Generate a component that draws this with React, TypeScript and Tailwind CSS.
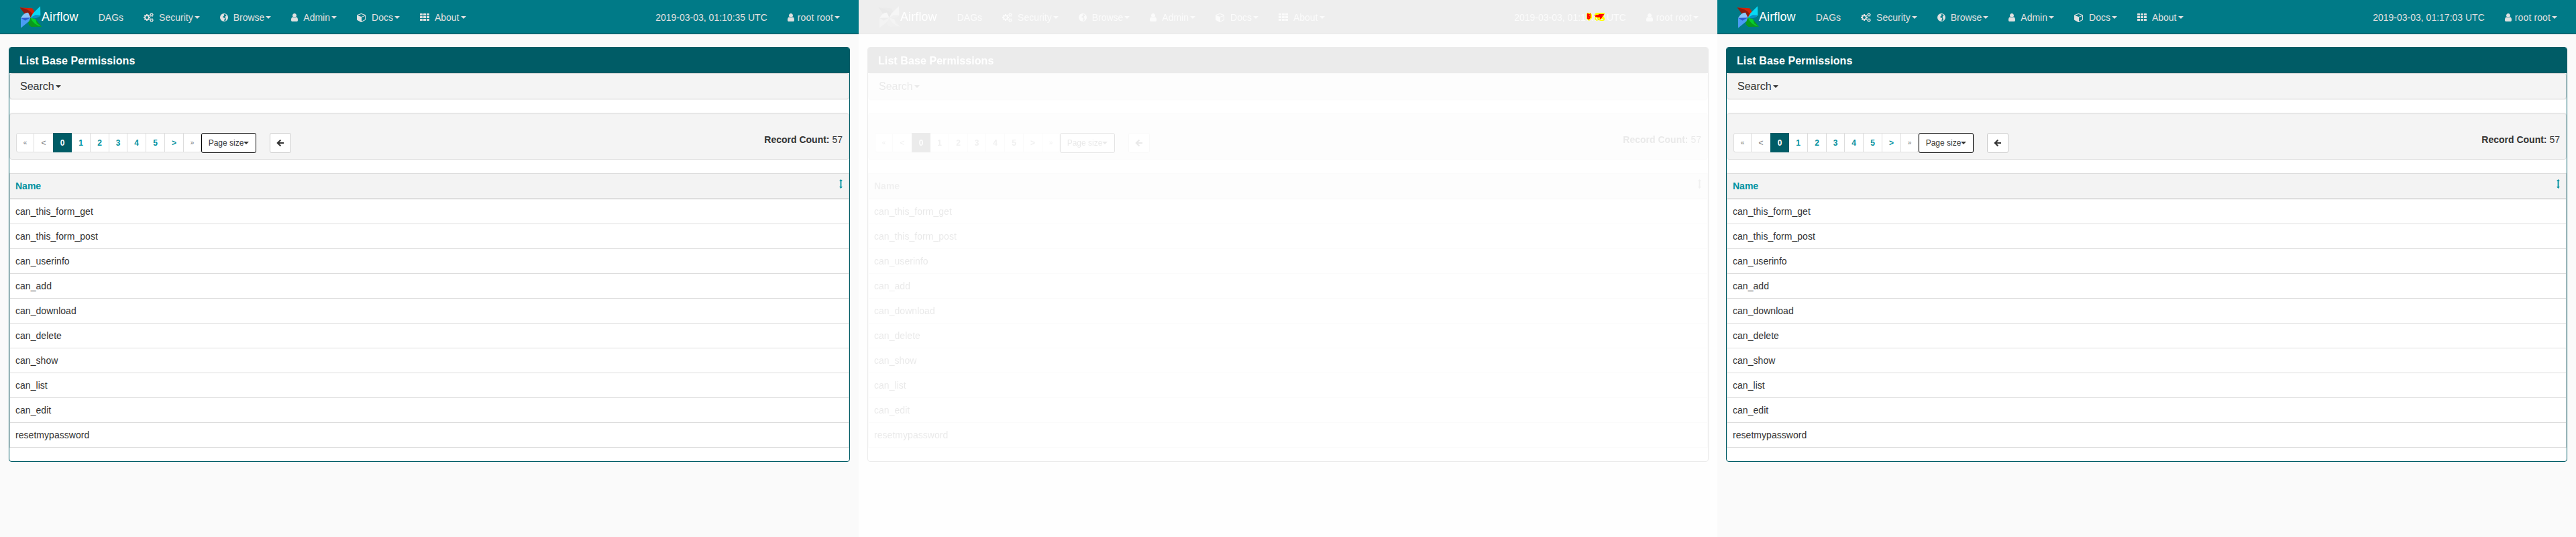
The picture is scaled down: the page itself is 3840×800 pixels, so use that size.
import type { ReactNode } from "react";

const rows = [
  "can_this_form_get",
  "can_this_form_post",
  "can_userinfo",
  "can_add",
  "can_download",
  "can_delete",
  "can_show",
  "can_list",
  "can_edit",
  "resetmypassword",
];

const userPath =
  "M1280 1399q0 109-62.5 187t-150.5 78h-854q-88 0-150.5-78t-62.5-187q0-85 8.5-160.5t31.5-152 58.5-131 94-89 134.5-34.5q131 128 313 128t313-128q76 0 134.5 34.5t94 89 58.5 131 31.5 152 8.5 160.5zm-256-887q0 159-112.5 271.5t-271.5 112.5-271.5-112.5-112.5-271.5 112.5-271.5 271.5-112.5 271.5 112.5 112.5 271.5z";

function UserIcon() {
  return (
    <svg className="h-[14px] w-[10px] shrink-0" viewBox="0 0 1280 1792" fill="currentColor">
      <path d={userPath} />
    </svg>
  );
}

function CogsIcon() {
  return (
    <svg className="h-[14px] w-[15px] shrink-0" viewBox="0 0 1920 1792" fill="currentColor">
      <path
        fillRule="evenodd"
        d="M896 896q0-106-75-181t-181-75-181 75-75 181 75 181 181 75 181-75 75-181zm768 512q0-52-38-90t-90-38-90 38-38 90q0 53 37.5 90.5t90.5 37.5 90.5-37.5 37.5-90.5zm0-1024q0-52-38-90t-90-38-90 38-38 90q0 53 37.5 90.5t90.5 37.5 90.5-37.5 37.5-90.5zm-384 421v185q0 10-7 19.5t-16 10.5l-155 24q-11 35-32 76 34 48 90 115 7 11 7 20 0 12-7 19-23 30-82.5 89.5t-78.5 59.5q-11 0-21-7l-115-90q-37 19-77 31-11 108-23 155-7 24-30 24h-186q-11 0-20-7.5t-10-17.5l-23-153q-34-10-75-31l-118 89q-7 7-20 7-11 0-21-8-144-133-144-160 0-9 7-19 10-14 41-53t47-61q-23-44-35-82l-152-24q-10-1-17-9.5t-7-19.5v-185q0-10 7-19.5t16-10.5l155-24q11-35 32-76-34-48-90-115-7-11-7-20 0-12 7-20 22-30 82-89t79-59q11 0 21 7l115 90q34-18 77-32 11-108 23-154 7-24 30-24h186q11 0 20 7.5t10 17.5l23 153q34 10 75 31l118-89q8-7 20-7 11 0 21 8 144 133 144 160 0 8-7 19-12 16-42 54t-45 60q23 48 34 82l152 23q10 2 17 10.5t7 19.5zm640 533v140q0 16-149 31-12 27-30 52 51 113 51 138 0 4-4 7-122 71-124 71-8 0-46-47t-52-68q-20 2-30 2t-30-2q-14 21-52 68t-46 47q-2 0-124-71-4-3-4-7 0-25 51-138-18-25-30-52-149-15-149-31v-140q0-16 149-31 13-29 30-52-51-113-51-138 0-4 4-7 4-2 35-20t59-34 30-16q8 0 46 46.5t52 67.5q20-2 30-2t30 2q51-71 92-112l6-2q4 0 124 70 4 3 4 7 0 25-51 138 17 23 30 52 149 15 149 31zm0-1024v140q0 16-149 31-12 27-30 52 51 113 51 138 0 4-4 7-122 71-124 71-8 0-46-47t-52-68q-20 2-30 2t-30-2q-14 21-52 68t-46 47q-2 0-124-71-4-3-4-7 0-25 51-138-18-25-30-52-149-15-149-31v-140q0-16 149-31 13-29 30-52-51-113-51-138 0-4 4-7 4-2 35-20t59-34 30-16q8 0 46 46.5t52 67.5q20-2 30-2t30 2q51-71 92-112l6-2q4 0 124 70 4 3 4 7 0 25-51 138 17 23 30 52 149 15 149 31z"
      />
    </svg>
  );
}

function GlobeIcon() {
  return (
    <svg className="h-[14px] w-[12px] shrink-0" viewBox="0 0 12 14" fill="currentColor">
      <path
        fillRule="evenodd"
        d="M6 1a6 6 0 1 1 0 12a6 6 0 0 1 0-12zM6.6 2L5.6 3L6.4 4L5.2 5.2L4.2 5.8L4.4 6.9L6.2 7.4L7.3 8.4L6.6 10L6.2 11.9Q8 11.9 9.2 10.7L8.2 9.2L8.6 7.9L7.6 6.8L7.9 5.4L9.2 4.6L9.4 3.5Q8.2 2.2 6.6 2z"
      />
    </svg>
  );
}

function CubeIcon() {
  return (
    <svg className="h-[14px] w-[14px] shrink-0" viewBox="0 0 1792 1792" fill="currentColor">
      <path d="M896 1629l640-349v-636l-640 233v752zm-64-865l698-254-698-254-698 254zm832-252v768q0 35-18 65t-49 47l-704 384q-28 16-61 16t-61-16l-704-384q-31-17-49-47t-18-65v-768q0-40 23-73t61-47l704-256q22-8 44-8t44 8l704 256q38 14 61 47t23 73z" />
    </svg>
  );
}

function GridIcon() {
  return (
    <svg className="h-[14px] w-[14px] shrink-0" viewBox="0 0 14 14" fill="currentColor">
      {[1, 5, 9].map((y) =>
        [0, 5, 10].map((x) => <rect key={`${x}-${y}`} x={x} y={y} width="4" height="3" rx="0.5" />),
      )}
    </svg>
  );
}

function Logo() {
  return (
    <svg className="mt-[9px] h-[33px] w-[33px] shrink-0" viewBox="0 0 100 100">
      <path d="M2 7L58 10Q72 26 68 40L50 52L24 30z" fill="#d42208" />
      <path d="M2 7L24 36L46 40L50 52L58 34Q40 12 2 7z" fill="#8e1c10" />
      <path d="M94 1L95 42Q80 58 50 52L62 32z" fill="#08d8f6" />
      <path d="M72 40L95 42Q80 62 50 52z" fill="#0a8fc4" />
      <path d="M100 93L54 94Q30 82 48 54L76 64z" fill="#0a9a1c" />
      <path d="M50 52L74 60L78 78L100 93Q62 84 50 52z" fill="#06d02c" />
      <path d="M6 99L6 54L50 52L44 68z" fill="#4a9cf4" />
      <path d="M6 54Q22 28 40 30L50 52L34 56z" fill="#8cc4f8" />
      <path d="M6 54L50 52L26 66z" fill="#2c5cd0" />
    </svg>
  );
}

function Caret() {
  return (
    <span className="ml-0.5 inline-block h-0 w-0 shrink-0 border-x-4 border-t-4 border-x-transparent border-t-current" />
  );
}

function MenuItem({ icon, label }: { icon: ReactNode; label: string }) {
  return (
    <div className="flex items-center px-[15px]">
      {icon}
      <span className="ml-2">{label}</span>
      <Caret />
    </div>
  );
}

function PageCell({ label, className }: { label: string; className: string }) {
  return (
    <div
      className={`flex items-center justify-center border-y border-r border-[#ddd] bg-white ${className}`}
    >
      {label}
    </div>
  );
}

function Screen({ time }: { time: string }) {
  return (
    <div className="h-[800px] w-[1280px] bg-[#fafafa] text-sm leading-5 text-[#333]">
      <nav className="flex h-[51px] border-b border-[#004f57] bg-[#007a87] pr-[13px] pl-[29px] text-[#e0e0e0]">
        <Logo />
        <div className="flex h-[50px] items-center text-lg tracking-[0.1px] text-white">Airflow</div>
        <div className="ml-[15px] flex h-[50px] items-center pt-px">
          <div className="px-[15px]">DAGs</div>
          <MenuItem icon={<CogsIcon />} label="Security" />
          <MenuItem icon={<GlobeIcon />} label="Browse" />
          <MenuItem icon={<UserIcon />} label="Admin" />
          <MenuItem icon={<CubeIcon />} label="Docs" />
          <MenuItem icon={<GridIcon />} label="About" />
        </div>
        <div className="ml-auto flex h-[50px] items-center pt-px">
          <div className="px-[15px]">{time}</div>
          <div className="flex items-center px-[15px]">
            <UserIcon />
            <span className="ml-[5px] tracking-[0.12px]">root root</span>
            <Caret />
          </div>
        </div>
      </nav>

      <main className="mx-[13px] mt-[19px] flex h-[618px] flex-col overflow-hidden rounded border border-[#005c66] bg-white">
        <h4 className="flex h-[38px] shrink-0 items-center bg-[#005c66] pt-0.5 pl-[15px] text-base font-bold tracking-[0.08px] text-white">
          List Base Permissions
        </h4>
        <div className="flex h-[39px] shrink-0 items-center rounded border border-[#ddd] bg-[#f4f4f4] pt-px pl-[15px] text-base shadow-[0_1px_1px_rgba(0,0,0,0.05)]">
          Search
          <Caret />
        </div>
        <div className="mt-5 flex h-[70px] shrink-0 rounded border border-[#e3e3e3] bg-[#f4f4f4] pt-[29px] pr-[9px] pl-[9px] shadow-[inset_0_1px_1px_rgba(0,0,0,0.05)]">
          <div className="flex h-[29px] text-xs text-[#0091a0]">
            <PageCell label="«" className="w-[27px] rounded-l-[3px] border-l text-[10px] text-[#777]" />
            <PageCell label="<" className="w-[28px] border-r-0 text-[#777]" />
            <div className="flex w-[28px] items-center justify-center bg-[#005c66] font-bold text-white">0</div>
            <PageCell label="1" className="w-[28px] font-bold" />
            <PageCell label="2" className="w-[28px] font-bold" />
            <PageCell label="3" className="w-[27px] font-bold" />
            <PageCell label="4" className="w-[28px] font-bold" />
            <PageCell label="5" className="w-[28px] font-bold" />
            <PageCell label=">" className="w-[28px] font-bold" />
            <PageCell label="»" className="w-[26px] rounded-r-[3px] text-[10px] text-[#777]" />
          </div>
          <div className="flex h-[30px] w-[82px] items-center justify-center rounded-[3px] border border-black bg-white text-xs">
            Page size
            <span className="h-0 w-0 border-x-4 border-t-4 border-x-transparent border-t-current" />
          </div>
          <div className="ml-5 flex h-[30px] w-8 items-center justify-center rounded-[3px] border border-[#ccc] bg-white">
            <svg className="h-3 w-3" viewBox="0 0 12 12" fill="none" stroke="currentColor" strokeWidth="2.1">
              <path d="M6.4 1.4L1.8 6L6.4 10.6M2.2 6H11" />
            </svg>
          </div>
          <div className="ml-auto">
            <strong>Record Count:</strong> 57
          </div>
        </div>
        <div className="mt-5 border-x border-[#ddd]">
          <div className="flex h-[39px] justify-between border-t border-b-2 border-[#ddd] bg-[#f3f3f3] pt-2 pr-[9px] pl-2 font-bold text-[#0091a0]">
            <span>Name</span>
            <svg className="h-[14px] w-[5px]" viewBox="0 0 5 14" fill="currentColor">
              <path d="M2.5 0L5 3H3.4V11H5L2.5 14L0 11H1.6V3H0z" />
            </svg>
          </div>
          {rows.map((row) => (
            <div key={row} className="flex h-[37px] items-center border-b border-[#ddd] pl-2 tracking-[0.04px]">
              {row}
            </div>
          ))}
        </div>
      </main>
    </div>
  );
}

function ChangedDigits() {
  return (
    <svg className="absolute top-[19px] left-[1085px] h-3 w-7" viewBox="0 0 28 12">
      <path d="M1 0H6L8 3V8L6 10L4 12L2 11L0 9V2z" fill="#ffff00" />
      <path d="M1 1H3V2H5V1H6V8H5V9H4V10H2V9H1z" fill="#ff0000" />
      <path d="M4 3H5V4H4zM3 6H4V7H3z" fill="#ffff00" />
      <path d="M13 1L15 0H27V2L25 5L27 8V11L25 12H21L18 11L15 12L12 10V7L13 5L12 3z" fill="#ffff00" />
      <path d="M12 4H14V3H18V2H26V4H24V6H23V8H22V9H20V7H16V6H13V5H12z" fill="#ff0000" />
      <path d="M14 8H16V9H17V10H14zM22 9H25V10H24V11H22z" fill="#eee" />
      <path d="M18 10H19V11H18z" fill="#ff0000" />
    </svg>
  );
}

export default function App() {
  return (
    <div className="flex h-[800px] w-[3840px] overflow-hidden bg-white font-['Liberation_Sans',Arial,sans-serif]">
      <Screen time="2019-03-03, 01:10:35 UTC" />
      <div className="relative">
        <div className="opacity-10 grayscale">
          <Screen time="2019-03-03, 01:17:03 UTC" />
        </div>
        <ChangedDigits />
      </div>
      <Screen time="2019-03-03, 01:17:03 UTC" />
    </div>
  );
}
